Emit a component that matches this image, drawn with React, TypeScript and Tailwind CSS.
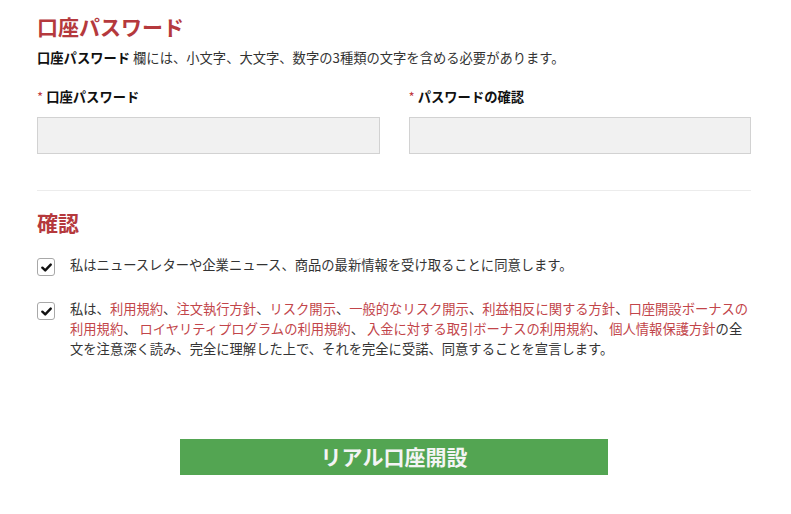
import React from 'react';

const Check = () => (
    <span className="mt-[3px] flex h-[18px] w-[18px] shrink-0 items-center justify-center rounded-[3px] border border-[#a8a8a8] bg-white">
        <svg viewBox="0 0 12 12" className="h-[11px] w-[11px]">
            <path d="M1.5 6.2 L4.6 9.2 L10.6 2.8" fill="none" stroke="#111" strokeWidth="2.6" strokeLinecap="round" strokeLinejoin="round" />
        </svg>
    </span>
);

const Link = ({ children }: { children: React.ReactNode }) => (
    <span className="text-[#c2454a]">{children}</span>
);

export default function App() {
    return (
        <div
            className="min-h-[514px] w-[791px] bg-white text-[13.3px] text-[#333]"
            style={{ fontFamily: '"Noto Sans CJK JP", "Noto Sans", sans-serif' }}
        >
            <div className="ml-[37px] w-[714px] pt-[12px]">
                {/* Password section */}
                <h2 className="text-[21px] font-bold leading-[28px] text-[#b5393d]">口座パスワード</h2>
                <p className="mt-[8px] leading-[20px]">
                    <span className="font-bold text-[#111]">口座パスワード</span> 欄には、小文字、大文字、数字の3種類の文字を含める必要があります。
                </p>

                <div className="mt-[19px] grid grid-cols-2 gap-[29px]">
                    <div>
                        <label className="block font-bold leading-[20px] text-[#111]">
                            <span className="mr-[3px] font-normal text-[#c0393f]">*</span>口座パスワード
                        </label>
                        <input type="password" className="mt-[10px] block h-[37px] w-full border border-[#d2d2d2] bg-[#f1f1f1] outline-none" />
                    </div>
                    <div>
                        <label className="block font-bold leading-[20px] text-[#111]">
                            <span className="mr-[3px] font-normal text-[#c0393f]">*</span>パスワードの確認
                        </label>
                        <input type="password" className="mt-[10px] block h-[37px] w-full border border-[#d2d2d2] bg-[#f1f1f1] outline-none" />
                    </div>
                </div>

                <div className="mt-[36px] border-t border-[#ececec]" />

                {/* Confirmation section */}
                <h2 className="mt-[17px] text-[21px] font-bold leading-[28px] text-[#b5393d]">確認</h2>

                <div className="mt-[19px] flex items-start gap-[15px]">
                    <Check />
                    <p className="leading-[20px]">私はニュースレターや企業ニュース、商品の最新情報を受け取ることに同意します。</p>
                </div>

                <div className="mt-[23px] flex items-start gap-[15px]">
                    <Check />
                    <p className="whitespace-nowrap leading-[20px]">
                        私は、<Link>利用規約</Link>、<Link>注文執行方針</Link>、<Link>リスク開示</Link>、<Link>一般的なリスク開示</Link>、<Link>利益相反に関する方針</Link>、<Link>口座開設ボーナスの</Link>
                        <br />
                        <Link>利用規約</Link>、 <Link>ロイヤリティプログラムの利用規約</Link>、 <Link>入金に対する取引ボーナスの利用規約</Link>、 <Link>個人情報保護方針</Link>の全
                        <br />
                        文を注意深く読み、完全に理解した上で、それを完全に受諾、同意することを宣言します。
                    </p>
                </div>

                {/* Submit */}
                <div className="mt-[80px] flex justify-center">
                    <button className="h-[36px] w-[428px] bg-[#53a552] text-[21px] font-bold text-[#f4f4f4]">
                        リアル口座開設
                    </button>
                </div>
            </div>
        </div>
    );
}
